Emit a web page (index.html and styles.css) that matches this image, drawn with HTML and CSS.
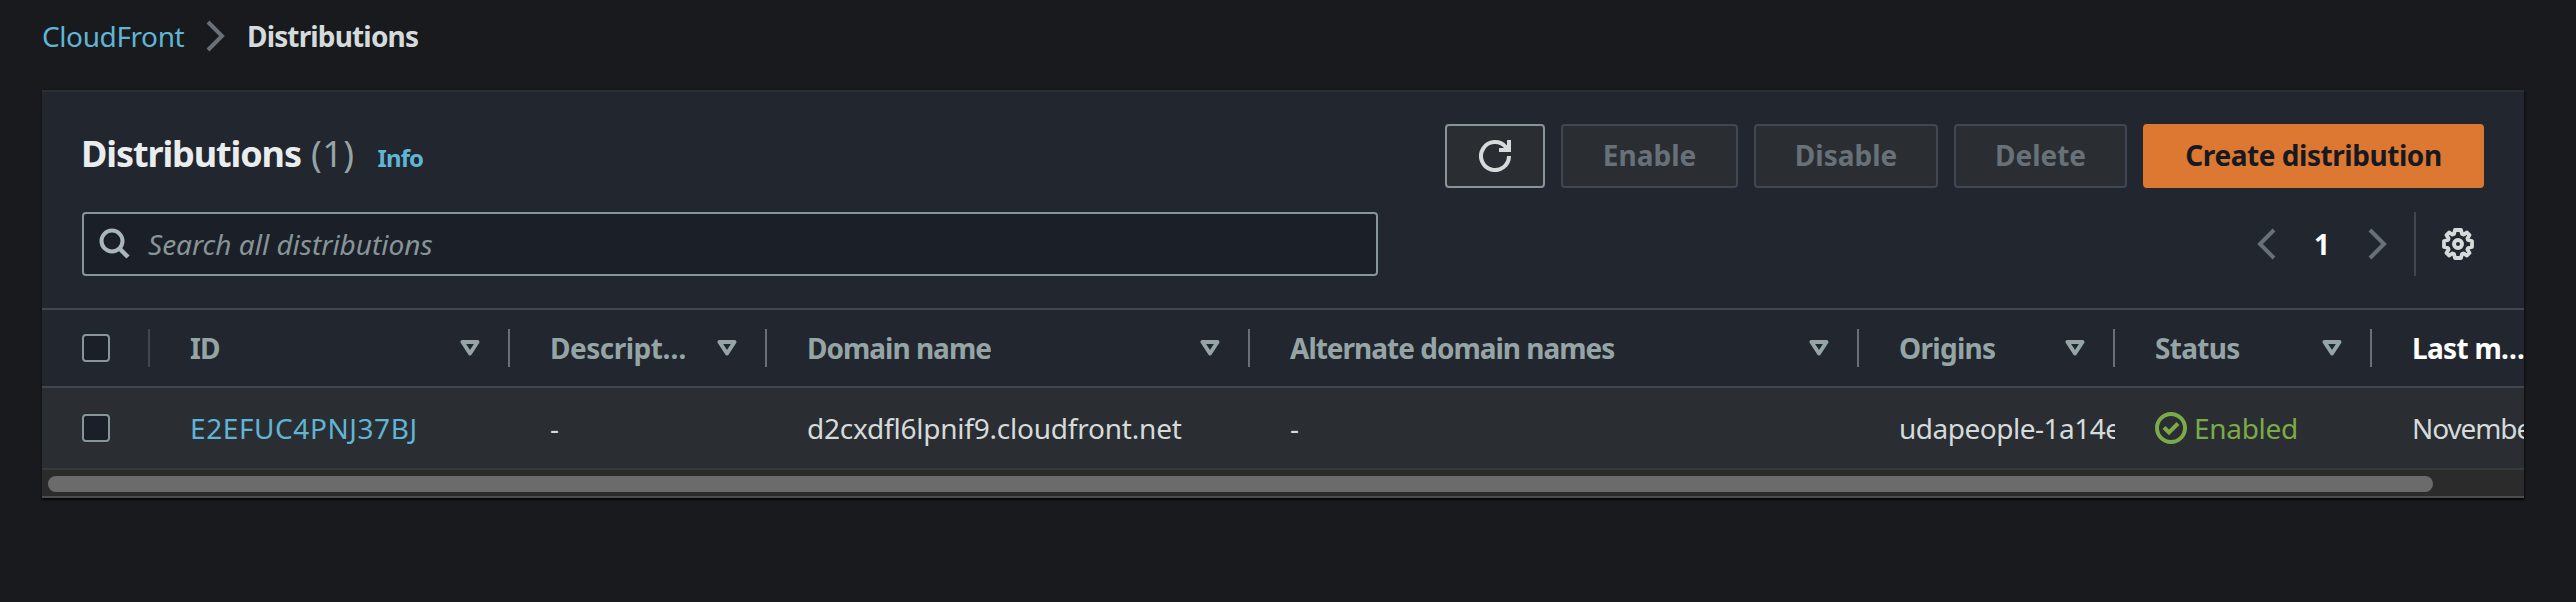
FILE: index.html
```
<!DOCTYPE html>
<html lang="en">
<head>
<meta charset="utf-8">
<title>CloudFront Distributions</title>
<link rel="stylesheet" href="styles.css">
</head>
<body>
<svg class="defs" width="0" height="0">
  <symbol id="sort" viewBox="0 0 20 16"><path d="M2.5 2h15L10 13.5z" fill="none" stroke="currentColor" stroke-width="4" stroke-linejoin="round"/></symbol>
</svg>
<nav class="breadcrumb">
  <a class="crumb-link">CloudFront</a>
  <svg class="crumb-sep" width="20" height="32" viewBox="0 0 20 32"><path d="M2 2l14 14L2 30" fill="none" stroke="currentColor" stroke-width="4"/></svg>
  <span class="crumb-current">Distributions</span>
</nav>
<main class="panel">
  <header class="panel-header">
    <h1 class="title">Distributions</h1>
    <span class="count">(1)</span>
    <a class="info">Info</a>
    <div class="actions">
      <button class="btn btn-refresh"><svg width="32" height="32" viewBox="0 0 32 32"><path d="M30 16A14 14 0 1 1 26.5 6.8L30 10" fill="none" stroke="currentColor" stroke-width="4"/><path d="M30 0v10H20" fill="none" stroke="currentColor" stroke-width="4"/></svg></button>
      <button class="btn btn-enable" disabled>Enable</button>
      <button class="btn btn-disable" disabled>Disable</button>
      <button class="btn btn-delete" disabled>Delete</button>
      <button class="btn btn-primary">Create distribution</button>
    </div>
  </header>
  <div class="tools">
    <div class="search">
      <svg width="32" height="32" viewBox="0 0 32 32"><circle cx="13" cy="13" r="10.5" fill="none" stroke="currentColor" stroke-width="4"/><path d="M20 20l9 9" stroke="currentColor" stroke-width="4.5"/></svg>
      <span class="placeholder">Search all distributions</span>
    </div>
    <div class="pager">
      <svg width="20" height="32" viewBox="0 0 20 32"><path d="M18 2L4 16l14 14" fill="none" stroke="currentColor" stroke-width="4"/></svg>
      <span class="page">1</span>
      <svg width="20" height="32" viewBox="0 0 20 32"><path d="M2 2l14 14L2 30" fill="none" stroke="currentColor" stroke-width="4"/></svg>
    </div>
    <div class="settings">
      <svg width="32" height="32" viewBox="0 0 32 32"><path d="M13 2h6l1 4 1.500.6L25 4.500 27.500 7 25.400 10.500 26 12l4 1v6l-4 1-.6 1.500L27.500 25 25 27.500l-3.500-2.100L20 26l-1 4h-6l-1-4-1.500-.6L7 27.500 4.500 25l2.100-3.500L6 20l-4-1v-6l4-1 .6-1.500L4.500 7 7 4.500l3.500 2.100L12 6z" fill="none" stroke="currentColor" stroke-width="3.800" stroke-linejoin="round"/><circle cx="16" cy="16" r="4" fill="none" stroke="currentColor" stroke-width="4"/></svg>
    </div>
  </div>
  <div class="table">
    <div class="row head">
      <div class="cell select"><i class="checkbox"></i></div>
      <div class="cell"><span>ID</span><svg class="sort"><use href="#sort"/></svg></div>
      <div class="cell"><span class="t-desc">Descript…</span><svg class="sort"><use href="#sort"/></svg></div>
      <div class="cell"><span>Domain name</span><svg class="sort"><use href="#sort"/></svg></div>
      <div class="cell"><span>Alternate domain names</span><svg class="sort"><use href="#sort"/></svg></div>
      <div class="cell"><span class="t-short">Origins</span><svg class="sort"><use href="#sort"/></svg></div>
      <div class="cell"><span class="t-short">Status</span><svg class="sort"><use href="#sort"/></svg></div>
      <div class="cell sorted"><span class="t-short">Last m…</span></div>
    </div>
    <div class="row data">
      <div class="cell select"><i class="checkbox"></i></div>
      <div class="cell"><a class="id-link">E2EFUC4PNJ37BJ</a></div>
      <div class="cell">-</div>
      <div class="cell">d2cxdfl6lpnif9.cloudfront.net</div>
      <div class="cell">-</div>
      <div class="cell origin">udapeople-1a14e</div>
      <div class="cell status"><svg width="32" height="32" viewBox="0 0 32 32"><circle cx="16" cy="16" r="14" fill="none" stroke="currentColor" stroke-width="4"/><path d="M9 15.500l5 5 9-9" fill="none" stroke="currentColor" stroke-width="4"/></svg><span>Enabled</span></div>
      <div class="cell date">Novembe</div>
    </div>
  </div>
  <div class="scrollbar"><div class="thumb"></div></div>
</main>
</body>
</html>
```
FILE: styles.css
```
* { box-sizing: border-box; }
body {
  margin: 0;
  height: 602px;
  overflow: hidden;
  background: #191a1e;
  color: #d5dbdb;
  font: 28px/36px "Noto Sans", "Open Sans", sans-serif;
}
svg { display: block; flex: none; }
.defs { position: absolute; }

.breadcrumb {
  display: flex;
  align-items: center;
  height: 90px;
  padding: 0 0 18px 42px;
}
.crumb-link, .crumb-current { margin-top: -1px; }
.crumb-link, .info, .id-link { color: #61b5d4; }
.crumb-link { width: 164px; letter-spacing: -.4px; }
.crumb-sep { color: #687078; }
.crumb-current { margin-left: 21px; font-weight: 700; letter-spacing: -.85px; }

.panel {
  width: 2482px;
  height: 408px;
  margin-left: 42px;
  background: #22262e;
  border-top: 2px solid #2b2e33;
  box-shadow: 0 2px 2px rgba(0, 0, 0, .6), 1px 1px 2px rgba(0, 0, 0, .3);
}
.panel-header {
  display: flex;
  align-items: baseline;
  height: 120px;
  padding: 32px 40px 0 39px;
}
.title { margin: 0; color: #eaeded; font-size: 36px; line-height: 59px; letter-spacing: -1.1px; }
.count { margin-left: 10px; color: #95a5a6; font-size: 36px; letter-spacing: .5px; }
.info { margin-left: 23px; font-size: 24px; font-weight: 700; letter-spacing: -.9px; }
.actions { display: flex; gap: 16px; margin-left: auto; align-self: flex-start; }
.btn {
  display: flex;
  align-items: center;
  justify-content: center;
  height: 64px;
  padding: 0 0 2px;
  border: 2px solid #414750;
  border-radius: 4px;
  background: #2a2e33;
  color: #687078;
  font: 700 28px/36px "Noto Sans", "Open Sans", sans-serif;
}
.btn-refresh { width: 100px; padding: 0; border-color: #879596; color: #d5dbdb; }
.btn-enable { width: 177px; }
.btn-disable { width: 184px; }
.btn-delete { width: 173px; }
.btn-primary { width: 341px; border-color: #dd7833; background: #dd7833; color: #16191f; letter-spacing: -.45px; }

.tools { display: flex; height: 96px; padding: 0 40px 32px; }
.search {
  display: flex;
  align-items: center;
  width: 1296px;
  height: 64px;
  padding-left: 15px;
  border: 2px solid #879596;
  border-radius: 4px;
  background: #1b1f28;
  color: #aab7b8;
}
.placeholder { margin-left: 17px; color: #879596; font-style: italic; }
.pager { display: flex; align-items: center; margin-left: auto; color: #687078; }
.page { width: 92px; text-align: center; color: #fff; font-weight: 700; }
.settings {
  display: flex;
  align-items: center;
  justify-content: flex-end;
  width: 70px;
  margin-left: 26px;
  padding-right: 10px;
  border-left: 2px solid #414750;
  color: #d5dbdb;
}

.table { overflow: hidden; }
.row { display: grid; grid-template-columns: 108px 360px 257px 483px 609px 256px 257px 152px; }
.head {
  height: 80px;
  border: solid #414750;
  border-width: 2px 0;
  color: #95a5a6;
  font-weight: 700;
  letter-spacing: -1px;
}
.cell {
  display: flex;
  align-items: center;
  padding-left: 40px;
  white-space: nowrap;
  overflow: hidden;
}
.head .cell:not(:last-child) {
  background: linear-gradient(#687078, #687078) right 0 center / 2px 38px no-repeat;
}
.head .select.cell { background-image: linear-gradient(#414750, #414750); }
.sort { width: 20px; height: 16px; margin: 0 30px 0 auto; }
.t-desc { letter-spacing: -.5px; }
.t-short { letter-spacing: -.7px; }
.sorted { color: #fff; }
.checkbox {
  width: 28px;
  height: 28px;
  border: 2px solid #879596;
  border-radius: 4px;
  background: #1b1f28;
}
.data { height: 82px; background: #2a2e33; border-bottom: 2px solid #38393b; }
.data .cell { letter-spacing: -.22px; }
.data .id-link { letter-spacing: .58px; }
.data .origin { letter-spacing: -.5px; }
.data .status { gap: 7px; color: #7bab46; letter-spacing: -.3px; }
.data .date { letter-spacing: -1.1px; }

.scrollbar {
  height: 28px;
  padding: 6px 0 0 6px;
  background: #2b2b2b;
  border-bottom: 2px solid #4d4d4d;
}
.thumb { width: 2385px; height: 16px; border-radius: 8px; background: #6b6b6b; }
```
